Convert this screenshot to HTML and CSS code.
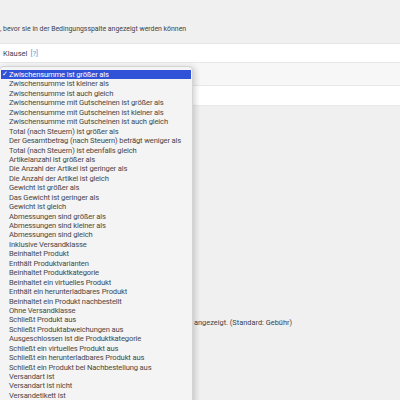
FILE: index.html
```html
<!DOCTYPE html>
<html lang="de">
<head>
<meta charset="utf-8">
<link rel="stylesheet" href="styles.css">
</head>
<body>
<div class="page">
  <p class="intro">, bevor sie in der Bedingungsspalte angezeigt werden können</p>
  <div class="table">
    <div class="row row-head"><span class="label">Klausel</span> <a class="help">[?]</a></div>
    <div class="row row-alt"></div>
    <div class="row row-white"></div>
  </div>
  <p class="note">angezeigt. (Standard: Gebühr)</p>
</div>
<ul class="dropdown">
  <li class="selected"><span class="check">✓</span>Zwischensumme ist größer als</li>
  <li>Zwischensumme ist kleiner als</li>
  <li>Zwischensumme ist auch gleich</li>
  <li>Zwischensumme mit Gutscheinen ist größer als</li>
  <li>Zwischensumme mit Gutscheinen ist kleiner als</li>
  <li>Zwischensumme mit Gutscheinen ist auch gleich</li>
  <li>Total (nach Steuern) ist größer als</li>
  <li>Der Gesamtbetrag (nach Steuern) beträgt weniger als</li>
  <li>Total (nach Steuern) ist ebenfalls gleich</li>
  <li>Artikelanzahl ist größer als</li>
  <li>Die Anzahl der Artikel ist geringer als</li>
  <li>Die Anzahl der Artikel ist gleich</li>
  <li>Gewicht ist größer als</li>
  <li>Das Gewicht ist geringer als</li>
  <li>Gewicht ist gleich</li>
  <li>Abmessungen sind größer als</li>
  <li>Abmessungen sind kleiner als</li>
  <li>Abmessungen sind gleich</li>
  <li>Inklusive Versandklasse</li>
  <li>Beinhaltet Produkt</li>
  <li>Enthält Produktvarianten</li>
  <li>Beinhaltet Produktkategorie</li>
  <li>Beinhaltet ein virtuelles Produkt</li>
  <li>Enthält ein herunterladbares Produkt</li>
  <li>Beinhaltet ein Produkt nachbestellt</li>
  <li>Ohne Versandklasse</li>
  <li>Schließt Produkt aus</li>
  <li>Schließt Produktabweichungen aus</li>
  <li>Ausgeschlossen ist die Produktkategorie</li>
  <li>Schließt ein virtuelles Produkt aus</li>
  <li>Schließt ein herunterladbares Produkt aus</li>
  <li>Schließt ein Produkt bei Nachbestellung aus</li>
  <li>Versandart ist</li>
  <li>Versandart ist nicht</li>
  <li>Versandetikett ist</li>
</ul>
</body>
</html>
```

FILE: styles.css
```css
html, body {
  margin: 0;
  padding: 0;
  background: #f0f0f1;
  font-family: Roboto, "Liberation Sans", sans-serif;
  color: #3c434a;
  overflow: hidden;
  height: 400px;
}

.page {
  padding-top: 24px;
}

.intro {
  margin: 0;
  height: 19px;
  font-size: 6.9px;
  line-height: 10px;
}

.table {
  border-top: 1px solid #e4e4e4;
}

.row {
  display: flex;
  align-items: center;
  border-bottom: 1px solid #e8e8e8;
}

.row-head {
  height: 18px;
  background: #ffffff;
  padding-left: 3px;
  gap: 3px;
  font-size: 7.5px;
}

.row-alt {
  height: 22px;
  background: #f7f7f7;
}

.row-white {
  height: 19px;
  background: #ffffff;
}

.help {
  color: #5b9dd9;
  font-size: 7.5px;
}

.note {
  margin: 212px 0 0 0;
  padding-left: 194px;
  font-size: 7.4px;
  line-height: 10px;
  white-space: nowrap;
}

.dropdown {
  position: absolute;
  left: -1px;
  top: 66px;
  width: 192px;
  height: 345px;
  margin: 0;
  padding: 3px 0 0 0;
  list-style: none;
  background: #f4f4f4;
  border: 1px solid #d4d4d4;
  border-radius: 4px;
  box-shadow: 2px 1px 6px rgba(0, 0, 0, 0.18);
  font-size: 7.6px;
  letter-spacing: -0.14px;
  color: #484848;
}

.dropdown li {
  height: 9.44px;
  line-height: 9.44px;
  padding-left: 9px;
  position: relative;
  white-space: nowrap;
}

.dropdown li.selected {
  background: #2f52d6;
  color: #ffffff;
  margin: 0 1px;
  padding-left: 8px;
}

.check {
  position: absolute;
  left: 1px;
  top: 0;
  font-size: 7px;
  letter-spacing: 0;
}
```
